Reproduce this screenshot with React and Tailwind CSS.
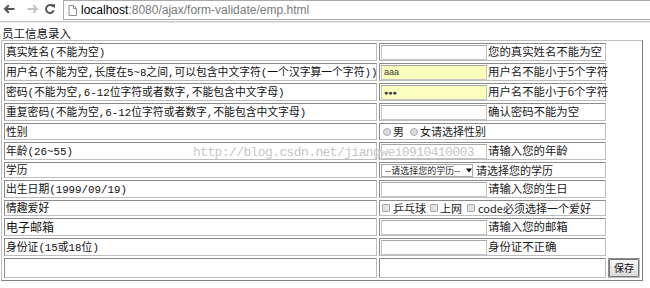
import React from "react";

const labelFont = "font-['Liberation_Mono','Noto_Sans_CJK_SC',monospace]";
const msgFont = "font-['Noto_Sans_CJK_SC','Liberation_Sans',sans-serif]";
const cellBorder =
  "border border-t-[#8a8a8a] border-l-[#8a8a8a] border-b-[#bdbdbd] border-r-[#bdbdbd]";

const rows = [
  { label: "真实姓名(不能为空)", kind: "input", msg: "您的真实姓名不能为空", h: "h-[18px]" },
  { label: "用户名(不能为空,长度在5~8之间,可以包含中文字符(一个汉字算一个字符))", kind: "input", value: "aaa", filled: true, msg: "用户名不能小于5个字符", h: "h-[18px]" },
  { label: "密码(不能为空,6-12位字符或者数字,不能包含中文字母)", kind: "password", msg: "用户名不能小于6个字符", h: "h-[18px]" },
  { label: "重复密码(不能为空,6-12位字符或者数字,不能包含中文字母)", kind: "input", msg: "确认密码不能为空", h: "h-[18px]" },
  { label: "性别", kind: "radio", h: "h-[17px]" },
  { label: "年龄(26~55)", kind: "input", msg: "请输入您的年龄", h: "h-[18px]" },
  { label: "学历", kind: "select", h: "h-[16px]" },
  { label: "出生日期(1999/09/19)", kind: "input", msg: "请输入您的生日", h: "h-[18px]" },
  { label: "情趣爱好", kind: "checkbox", h: "h-[16px]" },
  { label: "电子邮箱", kind: "input", msg: "请输入您的邮箱", h: "h-[18px]", big: true },
  { label: "身份证(15或18位)", kind: "input", msg: "身份证不正确", h: "h-[18px]" },
  { label: "", kind: "submit", h: "h-[20px]" },
];

function TextBox({ value, filled, password }) {
  return (
    <div
      className={`w-[106px] h-[15px] shrink-0 border border-[#c4c4c4] border-t-[#a6a6a6] flex items-center pl-[2px] text-[9px] leading-none text-[#333] font-['Liberation_Sans',sans-serif] ${
        filled ? "bg-[#faffbd]" : "bg-white"
      }`}
    >
      {password ? <span className="text-[7px]">●●●</span> : value}
    </div>
  );
}

function Radio() {
  return <span className="block w-[8px] h-[8px] rounded-full border border-[#a9a9a9] bg-[#dcdcdc]" />;
}

function Check() {
  return <span className="block w-[8px] h-[8px] rounded-[1px] border border-[#a9a9a9] bg-[#e2e2e2]" />;
}

function Content({ row }) {
  if (row.kind === "input" || row.kind === "password") {
    return (
      <div className="flex items-center">
        <TextBox value={row.value} filled={row.filled || row.kind === "password"} password={row.kind === "password"} />
        <span className={`ml-px text-[11.4px] leading-none text-[#1a1a1a] whitespace-nowrap ${msgFont}`}>{row.msg}</span>
      </div>
    );
  }
  if (row.kind === "radio") {
    return (
      <div className={`flex items-center text-[11px] leading-none text-[#1a1a1a] whitespace-nowrap ${msgFont}`}>
        <span className="ml-[2px]"><Radio /></span>
        <span className="ml-[2px]">男</span>
        <span className="ml-[6px]"><Radio /></span>
        <span className="ml-[2px]">女请选择性别</span>
      </div>
    );
  }
  if (row.kind === "checkbox") {
    return (
      <div className={`flex items-center text-[11px] leading-none text-[#1a1a1a] whitespace-nowrap ${msgFont}`}>
        <span className="ml-[1px]"><Check /></span>
        <span className="ml-[3px]">乒乓球</span>
        <span className="ml-[4px]"><Check /></span>
        <span className="ml-[2px]">上网</span>
        <span className="ml-[5px]"><Check /></span>
        <span className="ml-[3px]">code必须选择一个爱好</span>
      </div>
    );
  }
  if (row.kind === "select") {
    return (
      <div className="flex items-center">
        <div className={`w-[92px] h-[13px] shrink-0 border border-[#a9a9a9] bg-white flex items-center pl-[3px] text-[9px] leading-none text-[#222] whitespace-nowrap ${msgFont}`}>
          <span>--请选择您的学历--</span>
          <svg width="6" height="5" viewBox="0 0 6 5" className="ml-[5px]">
            <path d="M0 0.5 H6 L3 4.5 Z" fill="#111" />
          </svg>
        </div>
        <span className={`ml-[3px] text-[11px] leading-none text-[#1a1a1a] whitespace-nowrap ${msgFont}`}>请选择您的学历</span>
      </div>
    );
  }
  return null;
}

export default function App() {
  return (
    <div className="relative w-[650px] h-[288px] overflow-hidden bg-white">
      {/* browser toolbar */}
      <div className="h-[23px] flex flex-col bg-white">
        <div className="h-[20px] flex">
          <div className="w-[63px] shrink-0 relative">
            <svg width="12" height="10" viewBox="0 0 12 10" className="absolute left-[3px] top-[4px]">
              <path d="M11.5 5 H2 M5.8 1.2 L2 5 L5.8 8.8" stroke="#555" strokeWidth="2" fill="none" />
            </svg>
            <svg width="12" height="10" viewBox="0 0 12 10" className="absolute left-[27px] top-[4px]">
              <path d="M0.5 5 H10 M6.2 1.2 L10 5 L6.2 8.8" stroke="#c4c4c4" strokeWidth="2" fill="none" />
            </svg>
            <svg width="12" height="12" viewBox="0 0 12 12" className="absolute left-[44px] top-[3px]">
              <path d="M9.2 3.6 A4 4 0 1 0 9.8 7.4" stroke="#555" strokeWidth="2" fill="none" />
              <path d="M6.8 1.2 L11 1.2 L11 5.4 Z" fill="#555" />
            </svg>
          </div>
          <div className="flex-1 border border-r-0 border-[#aaaaaa] flex items-center bg-white">
            <svg width="9" height="11" viewBox="0 0 9 11" className="ml-[4px]">
              <path d="M1 0.5 H5.5 L8.5 3.5 V10.5 H1 Z M5.5 0.5 V3.5 H8.5" stroke="#8e8e8e" strokeWidth="1" fill="none" />
            </svg>
            <span className="ml-[4px] text-[12px] leading-none font-['Liberation_Sans',sans-serif] whitespace-nowrap">
              <span className="text-black">localhost</span>
              <span className="text-[#7a7a7a]">:8080/ajax/form-validate/emp.html</span>
            </span>
          </div>
        </div>
        <div className="h-[1px]" />
        <div className="h-[1px] bg-[#c8c8c8]" />
        <div className="h-[1px] bg-[#e6e6e6]" />
      </div>

      {/* page */}
      <div className={`pl-[2px] pt-[4px] h-[17px] text-[11.5px] leading-[12px] text-[#111] ${msgFont}`}>员工信息录入</div>

      <div className="ml-[1px] w-[642px] border border-t-[#bdbdbd] border-l-[#bdbdbd] border-b-[#808080] border-r-[#808080] p-[2px] grid grid-cols-[373px_227px_32px] gap-[2px]">
        {rows.map((row, i) => (
          <React.Fragment key={i}>
            <div className={`${row.h} ${cellBorder} px-px flex items-center whitespace-nowrap leading-none text-[#111] ${row.big ? "text-[12px]" : "text-[10.8px]"} ${labelFont}`}>
              <span className="pt-[3px]">{row.label}</span>
            </div>
            <div className={`${row.h} ${cellBorder} px-px flex items-center`}>
              <Content row={row} />
            </div>
            {row.kind === "submit" ? (
              <div className={`${row.h} ${cellBorder} flex items-center justify-center`}>
                <button className={`w-[30px] h-[18px] border border-[#777] rounded-[1px] bg-gradient-to-b from-[#f6f6f6] to-[#dadada] text-[10px] leading-none text-[#111] ${msgFont}`}>
                  保存
                </button>
              </div>
            ) : (
              <div className={row.h} />
            )}
          </React.Fragment>
        ))}
      </div>

      {/* watermark */}
      <div className="absolute left-[193px] top-[146px] text-[13px] leading-[13px] tracking-[-0.6px] text-[#c6c6c6] font-['Liberation_Mono',monospace] whitespace-nowrap pointer-events-none">
        http://blog.csdn.net/jiangwei0910410003
      </div>
    </div>
  );
}
